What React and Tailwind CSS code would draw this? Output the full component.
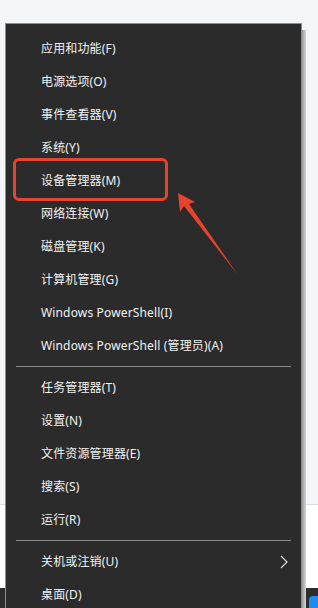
import React from 'react';

const GROUPS = [
  [
    '应用和功能(F)',
    '电源选项(O)',
    '事件查看器(V)',
    '系统(Y)',
    '设备管理器(M)',
    '网络连接(W)',
    '磁盘管理(K)',
    '计算机管理(G)',
    'Windows PowerShell(I)',
    'Windows PowerShell (管理员)(A)',
  ],
  ['任务管理器(T)', '设置(N)', '文件资源管理器(E)', '搜索(S)', '运行(R)'],
  ['关机或注销(U)', '桌面(D)'],
];

const FONT = { fontFamily: '"Noto Sans", "Noto Sans CJK SC", sans-serif' };

function Row({ label, submenu }) {
  return (
    <div className="flex h-[33px] items-center justify-between pl-[35px] pr-[13px]">
      <span className="text-[12px] tracking-[0.15px] text-[#f2f2f2]">{label}</span>
      {submenu && (
        <svg width="8" height="14" viewBox="0 0 8 14" className="text-[#d8d8d8]">
          <path d="M1 1l6 6-6 6" fill="none" stroke="currentColor" strokeWidth="1.2" />
        </svg>
      )}
    </div>
  );
}

export default function App() {
  return (
    <div className="relative h-[608px] w-[318px] overflow-hidden" style={FONT}>
      {/* page behind the menu */}
      <div className="flex h-full flex-col">
        <div className="h-[504px] bg-[#f5f6f8]" />
        <div className="h-px bg-[#dcdcdc]" />
        <div className="flex-1 bg-white" />
        <div className="flex h-[20px] justify-end bg-[#2d2d2d]">
          <div className="mt-[8px] h-[14px] w-[9px] rounded-tl-[4px] bg-[#1e8cf0]" />
        </div>
      </div>

      {/* shadow */}
      <div className="absolute left-[302px] top-[30px] bottom-0 w-[4px] bg-gradient-to-r from-[#9a9a9a] to-[#d6d6d6]" />

      {/* context menu */}
      <div className="absolute left-[5px] top-[23px] bottom-0 w-[297px] border border-b-0 border-[#8e8e8e] bg-[#2b2b2b] pt-[8px]">
        {GROUPS.map((group, gi) => (
          <div key={gi}>
            {gi > 0 && <div className="mx-[10px] my-[4px] h-px bg-[#8a8a8a]" />}
            {group.map((label) => (
              <Row key={label} label={label} submenu={label.startsWith('关机')} />
            ))}
          </div>
        ))}
      </div>

      {/* annotation */}
      <div className="absolute left-[13px] top-[158px] h-[43px] w-[155px] rounded-[6px] border-[3px] border-[#e8432c]" />
      <svg className="absolute left-0 top-0" width="318" height="608" viewBox="0 0 318 608">
        <path d="M178 193 L195 202 L189 204 L238 275 L184 206 L180 212 Z" fill="#e8432c" />
      </svg>
    </div>
  );
}
